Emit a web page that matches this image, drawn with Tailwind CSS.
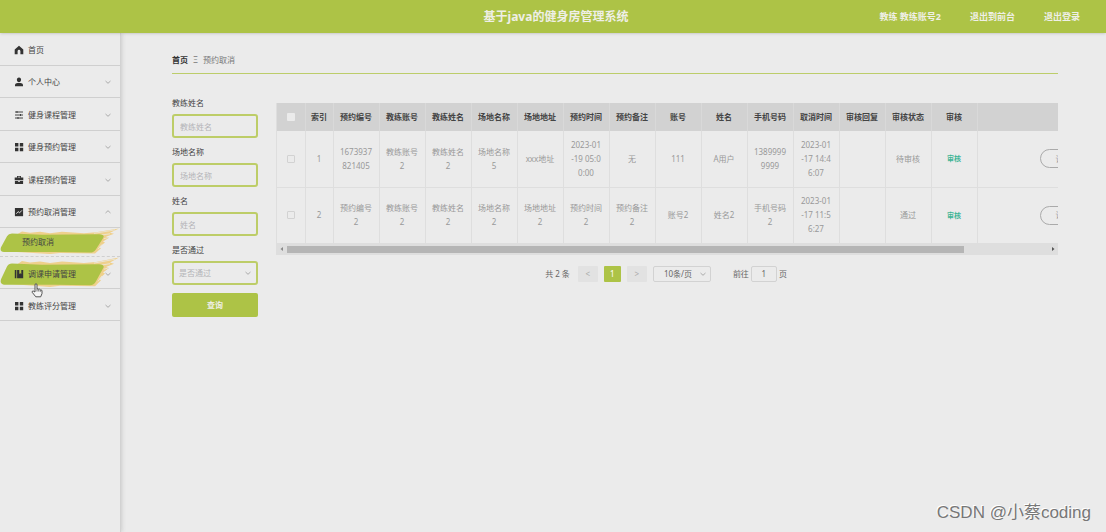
<!DOCTYPE html>
<html lang="zh-CN">
<head>
<meta charset="utf-8">
<title>基于java的健身房管理系统</title>
<script src="https://cdn.jsdelivr.net/npm/@tailwindcss/browser@4"></script>
</head>
<body class="relative flex min-h-screen flex-col bg-[#ebebeb] font-['Noto_Sans','Noto_Sans_CJK_SC',sans-serif] text-[8px] leading-[14px] text-[#555]">

<svg class="hidden">
  <symbol id="down" viewBox="0 0 8 8"><path d="M1.500 3 4 5.300 6.500 3" fill="none" stroke="#999" stroke-width=".8"/></symbol>
  <symbol id="grid" viewBox="0 0 10 10"><path d="M1 1h3.400v3.400H1zM5.800 1h3.400v3.400H5.800zM1 5.800h3.400v3.400H1zM5.800 5.800h3.400v3.400H5.800z" fill="#333"/></symbol>
  <symbol id="brush" viewBox="0 0 120 28" preserveAspectRatio="none">
    <path d="M18 6 22 3.500 30 5 40 4 50 5.500 62 4 84 5.500 96 4.500 119 .5 110 5 114 6 106 9 109 10 103 14 105 15 99 20 101 21 95 26.500 60 26 50 27 4 24 2 20Z" fill="#efd08c"/>
    <path d="M94 5.500 115 2M100 7.500 110 6M104 11 108 10M98 22 102 17" stroke="#ebe6d6" stroke-width=".9" fill="none"/>
    <path d="M7 8.500Q8.500 5.800 12 5.800L42 7 99 6.500Q105.500 7 103 10.500L96 22Q94 25.500 90 25.500L55 25 4 25Q-.5 24.500 1 20Z" fill="#adc346"/>
  </symbol>
</svg>

<header class="relative z-10 grid h-[33px] grid-cols-[1fr_auto_1fr] items-center bg-[#adc346] font-bold text-[#efefe6] shadow-sm">
  <span></span>
  <h1 class="pl-1.5 text-[12px]">基于java的健身房管理系统</h1>
  <nav class="flex justify-end gap-[29px] pr-[26px] text-[9px]">
    <span>教练 教练账号2</span><a href="#">退出到前台</a><a href="#">退出登录</a>
  </nav>
</header>

<div class="flex flex-1">
  <aside class="w-[121px] shrink-0 border-r border-[#d2d2d2] shadow-[1px_0_4px_#ccc]">
    <nav class="text-[#444]">
      <div class="flex h-[195px] flex-col">
        <button class="flex flex-1 items-center gap-1 border-b border-[#cfcfcf] pt-0.5 pr-2 pl-3.5 text-left">
          <svg class="size-2.5" viewBox="0 0 10 10"><path d="M5 .8 9.300 4.600V9.200H6.400V6Q6.200 4.800 5 4.800T3.600 6V9.200H.7V4.600Z" fill="#333"/></svg>首页</button>
        <button class="flex flex-1 items-center gap-1 border-b border-[#cfcfcf] pt-0.5 pr-2 pl-3.5 text-left">
          <svg class="size-2.5" viewBox="0 0 10 10"><path d="M5 .6C8 .6 7.600 5.200 5 5.200S2 .6 5 .6M1 9.200V7.700Q1.300 6 3.500 6H6.500Q8.700 6 9 7.700V9.200Z" fill="#333"/></svg><span class="flex-1">个人中心</span><svg class="size-2"><use href="#down"/></svg></button>
        <button class="flex flex-1 items-center gap-1 border-b border-[#cfcfcf] pt-0.5 pr-2 pl-3.5 text-left">
          <svg class="size-2.5" viewBox="0 0 10 10"><path d="M1 2H9M1 5H9M1 8H9M3 1V3M6.500 4V6M4 7V9" stroke="#333" stroke-width=".9"/></svg><span class="flex-1">健身课程管理</span><svg class="size-2"><use href="#down"/></svg></button>
        <button class="flex flex-1 items-center gap-1 border-b border-[#cfcfcf] pt-0.5 pr-2 pl-3.5 text-left">
          <svg class="size-2.5"><use href="#grid"/></svg><span class="flex-1">健身预约管理</span><svg class="size-2"><use href="#down"/></svg></button>
        <button class="flex flex-1 items-center gap-1 border-b border-[#cfcfcf] pt-0.5 pr-2 pl-3.5 text-left">
          <svg class="size-2.5" viewBox="0 0 10 10"><path d="M3 2.600V1H7V2.600H9.300V5.200H.7V2.600ZM3.800 2.600H6.200V1.800H3.800ZM.9 6H4V6.800H6V6H9.100V9H.9Z" fill="#333" fill-rule="evenodd"/></svg><span class="flex-1">课程预约管理</span><svg class="size-2"><use href="#down"/></svg></button>
        <button class="flex flex-1 items-center gap-1 border-b border-[#cfcfcf] pt-0.5 pr-2 pl-3.5 text-left" aria-expanded="true">
          <svg class="size-2.5" viewBox="0 0 10 10"><path d="M.9 1H9.100V9.200H.9Z" fill="#333"/><path d="M2.300 6.700 4.200 4.600 5.500 5.900 7.900 3.400" fill="none" stroke="#eee" stroke-width=".9"/></svg><span class="flex-1">预约取消管理</span><svg class="size-2 rotate-180"><use href="#down"/></svg></button>
      </div>
      <a href="#" class="relative flex h-[29px] items-center border-b border-dashed border-[#cfcfcf] pl-[22px]">
        <svg class="absolute inset-x-0 top-0 h-[27px] w-full"><use href="#brush"/></svg><span class="relative">预约取消</span></a>
      <button class="relative flex h-8 w-full items-center gap-1 border-b border-[#cfcfcf] pt-0.5 pr-2 pl-3.5 text-left">
        <svg class="absolute inset-x-0 top-0 h-[31px] w-full"><use href="#brush"/></svg>
        <svg class="relative size-2.5" viewBox="0 0 10 10"><path d="M.8 1H2.400V9.200H.8ZM3.100 1H5.300V5L6.300 4.200 7.300 5V1H9.200V9.200H3.100Z" fill="#333"/></svg><span class="relative flex-1">调课申请管理</span><svg class="relative size-2"><use href="#down"/></svg>
        <svg class="absolute top-[26px] left-[31px] z-10 h-[15px] w-3" viewBox="0 0 12 15"><path d="M4 9V2Q4 .7 5 .7T6 2V6Q7 5.300 7.700 6.300 8.700 5.700 9.300 6.800 11 6.500 11 8V10.500L9.700 13.800H4.800L1.200 9.300Q.8 8 2.200 8Z" fill="#f4f4f4" stroke="#444" stroke-width=".9"/><path d="M6 6V8.500M7.700 6.500V8.500M9.300 7V8.800" stroke="#444" stroke-width=".7"/></svg>
      </button>
      <button class="flex h-8 w-full items-center gap-1 border-b border-[#cfcfcf] pt-0.5 pr-2 pl-3.5 text-left">
        <svg class="size-2.5"><use href="#grid"/></svg><span class="flex-1">教练评分管理</span><svg class="size-2"><use href="#down"/></svg></button>
    </nav>
  </aside>

  <main class="min-w-0 flex-1 pt-5 pr-12 pl-[51px]">
    <div class="flex gap-[5px] border-b border-[#bccd6a] pb-1.5 text-[#777]"><a href="#" class="font-bold text-[#333]">首页</a><span>Ξ</span><span>预约取消</span></div>

    <div class="mt-[22px] flex items-start gap-[18px]">
      <form class="flex w-[86px] shrink-0 flex-col text-[#444]">
        <label for="coach" class="mb-1">教练姓名</label>
        <input id="coach" placeholder="教练姓名" class="mb-[7px] h-6 rounded-[3px] border-2 border-[#bdcd68] px-1.5 placeholder:text-[#b4b4b8]">
        <label for="place" class="mb-1">场地名称</label>
        <input id="place" placeholder="场地名称" class="mb-[7px] h-6 rounded-[3px] border-2 border-[#bdcd68] px-1.5 placeholder:text-[#b4b4b8]">
        <label for="name" class="mb-1">姓名</label>
        <input id="name" placeholder="姓名" class="mb-[7px] h-6 rounded-[3px] border-2 border-[#bdcd68] px-1.5 placeholder:text-[#b4b4b8]">
        <label for="pass" class="mb-1">是否通过</label>
        <div class="relative mb-2">
          <select id="pass" class="h-6 w-full appearance-none rounded-[3px] border-2 border-[#bdcd68] px-[5px] text-[#b4b4b8]"><option>是否通过</option></select>
          <svg class="pointer-events-none absolute top-2 right-1.5 size-2"><use href="#down"/></svg>
        </div>
        <button type="button" class="h-6 rounded-xs bg-[#adc346] font-bold text-[#efefe6]">查询</button>
      </form>

      <section class="mt-[7px] min-w-0 flex-1">
        <div class="overflow-hidden border-l border-[#dedede]">
          <table class="w-[112%] table-fixed border-collapse text-center text-[#999] [&_td]:border-r [&_td]:border-b [&_td]:border-[#dedede] [&_td]:px-1.5 [&_td]:break-all [&_th]:border-r [&_th]:border-[#d9d9d9]">
            <colgroup><col class="w-[28px]"><col class="w-[28px]"><col class="w-[46px]" span="14"><col></colgroup>
            <thead class="bg-[#d2d2d2] text-[#444]">
              <tr class="h-7"><th><input type="checkbox" aria-label="全选" class="block mx-auto size-2 appearance-none rounded-[1px] bg-[#ebebeb]"></th><th>索引</th><th>预约编号</th><th>教练账号</th><th>教练姓名</th><th>场地名称</th><th>场地地址</th><th>预约时间</th><th>预约备注</th><th>账号</th><th>姓名</th><th>手机号码</th><th>取消时间</th><th>审核回复</th><th>审核状态</th><th>审核</th><th></th></tr>
            </thead>
            <tbody>
              <tr class="h-14"><td><input type="checkbox" aria-label="选择 1" class="block mx-auto size-2 appearance-none rounded-[1px] border border-[#d2d2d2]"></td><td>1</td><td>1673937821405</td><td>教练账号2</td><td>教练姓名2</td><td>场地名称5</td><td>xxx地址</td><td>2023-01<br>-19 05:0<br>0:00</td><td>无</td><td>111</td><td>A用户</td><td>13899999999</td><td>2023-01<br>-17 14:4<br>6:07</td><td></td><td>待审核</td><td><button class="text-[7px] font-bold text-[#3fb596]">审核</button></td><td class="text-left"><button class="ml-[56px] h-[19px] w-12 rounded-full border border-[#aaa] whitespace-nowrap">详情</button></td></tr>
              <tr class="h-14"><td><input type="checkbox" aria-label="选择 2" class="block mx-auto size-2 appearance-none rounded-[1px] border border-[#d2d2d2]"></td><td>2</td><td>预约编号2</td><td>教练账号2</td><td>教练姓名2</td><td>场地名称2</td><td>场地地址2</td><td>预约时间2</td><td>预约备注2</td><td>账号2</td><td>姓名2</td><td>手机号码2</td><td>2023-01<br>-17 11:5<br>6:27</td><td></td><td>通过</td><td><button class="text-[7px] font-bold text-[#3fb596]">审核</button></td><td class="text-left"><button class="ml-[56px] h-[19px] w-12 rounded-full border border-[#aaa] whitespace-nowrap">详情</button></td></tr>
            </tbody>
          </table>
          <div class="flex h-[11px] items-center bg-[#dedede]">
            <svg class="h-2 w-[10px]" viewBox="0 0 10 8"><path d="M6 2V6L3.500 4Z" fill="#888"/></svg>
            <div class="flex-1"><div class="h-[7px] w-[89%] bg-[#b5b5b5]"></div></div>
            <svg class="h-2 w-[10px]" viewBox="0 0 10 8"><path d="M4 2V6L6.500 4Z" fill="#555"/></svg>
          </div>
        </div>

        <div class="mt-[11px] flex h-4 items-center justify-center pr-0.5 text-[#666]">
          <span class="mr-2">共 2 条</span>
          <button class="mr-1.5 h-4 w-5 rounded-[1px] bg-[#e2e2e2] text-[#aaa]">&lt;</button>
          <button class="mr-1.5 h-4 w-[17px] rounded-[1px] bg-[#adc346] text-white">1</button>
          <button class="mr-1.5 h-4 w-5 rounded-[1px] bg-[#e2e2e2] text-[#aaa]">&gt;</button>
          <div class="relative mr-[22px]">
            <select aria-label="每页条数" class="block h-4 w-[58px] appearance-none rounded-xs border border-[#d2d2d2] pl-2.5"><option>10条/页</option></select>
            <svg class="pointer-events-none absolute top-1 right-1 size-2"><use href="#down"/></svg>
          </div>
          <label for="page">前往</label>
          <input id="page" value="1" class="mx-0.5 h-4 w-[26px] rounded-xs border border-[#d2d2d2] text-center">
          <span>页</span>
        </div>
      </section>
    </div>
  </main>
</div>

<div class="absolute right-[15px] bottom-[7px] font-['Liberation_Sans','Noto_Sans_CJK_SC',sans-serif] text-[17px] leading-6 text-[#777] [text-shadow:-1px_-1px_0_#fff]">CSDN @小蔡coding</div>
</body>
</html>
